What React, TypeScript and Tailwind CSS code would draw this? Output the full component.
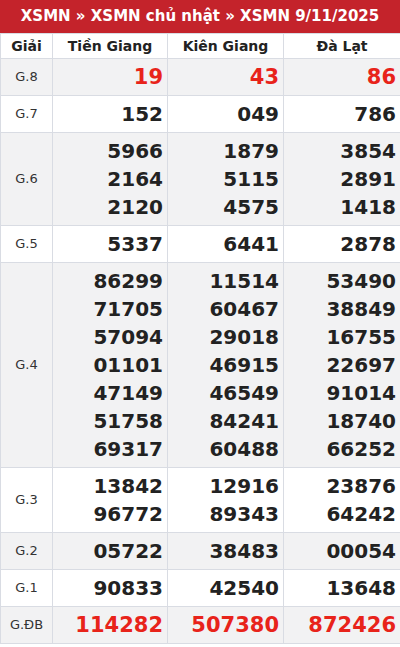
const rows: { label: string; cols: string[][]; big?: boolean }[] = [
  { label: "G.8", cols: [["19"], ["43"], ["86"]], big: true },
  { label: "G.7", cols: [["152"], ["049"], ["786"]] },
  {
    label: "G.6",
    cols: [
      ["5966", "2164", "2120"],
      ["1879", "5115", "4575"],
      ["3854", "2891", "1418"],
    ],
  },
  { label: "G.5", cols: [["5337"], ["6441"], ["2878"]] },
  {
    label: "G.4",
    cols: [
      ["86299", "71705", "57094", "01101", "47149", "51758", "69317"],
      ["11514", "60467", "29018", "46915", "46549", "84241", "60488"],
      ["53490", "38849", "16755", "22697", "91014", "18740", "66252"],
    ],
  },
  {
    label: "G.3",
    cols: [
      ["13842", "96772"],
      ["12916", "89343"],
      ["23876", "64242"],
    ],
  },
  { label: "G.2", cols: [["05722"], ["38483"], ["00054"]] },
  { label: "G.1", cols: [["90833"], ["42540"], ["13648"]] },
  { label: "G.ĐB", cols: [["114282"], ["507380"], ["872426"]], big: true },
];

export default function App() {
  return (
    <div className="w-[400px] bg-white font-['DejaVu_Sans',sans-serif] text-[#222]">
      <div className="h-[33px] bg-[#c4232b] flex items-center justify-center text-white font-bold text-[15px]">
        XSMN » XSMN chủ nhật » XSMN 9/11/2025
      </div>
      <table className="w-[400px] border-collapse table-fixed border border-[#d9dce3]">
        <colgroup>
          <col className="w-[52px]" />
          <col className="w-[115px]" />
          <col className="w-[116px]" />
          <col className="w-[117px]" />
        </colgroup>
        <thead>
          <tr className="h-[25px] text-[14px] font-bold">
            <th className="border border-[#d9dce3] font-bold">Giải</th>
            <th className="border border-[#d9dce3] font-bold">Tiền Giang</th>
            <th className="border border-[#d9dce3] font-bold">Kiên Giang</th>
            <th className="border border-[#d9dce3] font-bold">Đà Lạt</th>
          </tr>
        </thead>
        <tbody>
          {rows.map((row, i) => (
            <tr key={row.label} className={i % 2 === 0 ? "bg-[#f2f2f3]" : "bg-white"}>
              <td className="border border-[#d9dce3] text-center text-[13px] text-[#333]">
                {row.label}
              </td>
              {row.cols.map((nums, j) => (
                <td key={j} className="border border-[#d9dce3] text-right pr-[4px] py-[4px] align-middle">
                  {nums.map((n) => (
                    <div
                      key={n}
                      className={
                        row.big
                          ? "text-[21px] leading-[28px] font-bold text-[#e8231a]"
                          : "text-[20px] leading-[28px] font-bold"
                      }
                    >
                      {n}
                    </div>
                  ))}
                </td>
              ))}
            </tr>
          ))}
        </tbody>
      </table>
    </div>
  );
}
